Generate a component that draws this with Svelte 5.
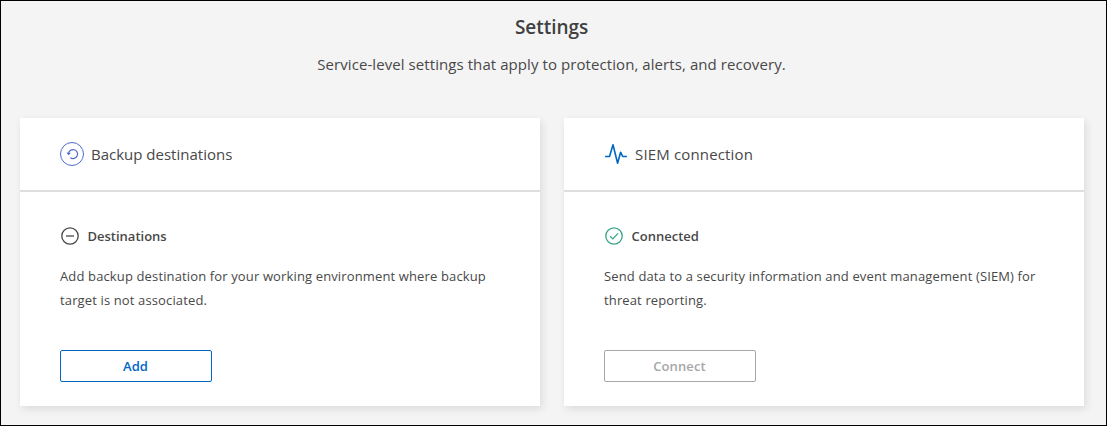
<script>
  const cards = [
    {
      icon: 'restore',
      title: 'Backup destinations',
      status: 'Destinations',
      connected: false,
      lines: [
        'Add backup destination for your working environment where backup',
        'target is not associated.'
      ],
      action: 'Add',
      disabled: false
    },
    {
      icon: 'pulse',
      title: 'SIEM connection',
      status: 'Connected',
      connected: true,
      lines: [
        'Send data to a security information and event management (SIEM) for',
        'threat reporting.'
      ],
      action: 'Connect',
      disabled: true
    }
  ];
</script>

<main class="page">
  <header>
    <h1>Settings</h1>
    <p class="subtitle">Service-level settings that apply to protection, alerts, and recovery.</p>
  </header>
  <div class="cards">
    {#each cards as card}
      <section class="card">
        <div class="card-head">
          {#if card.icon === 'restore'}
            <svg class="head-icon" width="24" height="24" viewBox="0 0 24 24" fill="none" stroke="#4d6bd0">
              <circle cx="12" cy="12" r="11.5" />
              <path d="M8.6 11.6A4.5 4.5 0 1 1 10.4 15.7" stroke-width="1.2" />
              <path d="M6.4 10.4L10.8 11L8.6 13.2Z" fill="#4d6bd0" stroke="none" />
            </svg>
          {:else}
            <svg class="head-icon" width="24" height="24" viewBox="0 0 24 24" fill="none" stroke="#0067c5" stroke-width="1.6" stroke-linejoin="round" stroke-linecap="round">
              <path d="M1.7 14.5H5.5L9 2.7L13.6 21.3L16.6 10.2L18.7 14.5H22.3" />
            </svg>
          {/if}
          <h2 class={card.icon}>{card.title}</h2>
        </div>
        <div class="card-body">
          <div class="status">
            <svg width="18" height="18" viewBox="0 0 18 18" fill="none" stroke={card.connected ? '#3aa688' : '#484848'} stroke-width="1.3">
              <circle cx="9" cy="9" r="8.2" />
              {#if card.connected}
                <path d="M5.1 9.2L7.9 11.9L13 6.4" />
              {:else}
                <path d="M5 9H13" />
              {/if}
            </svg>
            <span>{card.status}</span>
          </div>
          <p class="description">{card.lines[0]}<br />{card.lines[1]}</p>
          <button class:disabled={card.disabled} disabled={card.disabled}>{card.action}</button>
        </div>
      </section>
    {/each}
  </div>
</main>

<style>
  .page {
    box-sizing: border-box;
    width: 1107px;
    height: 426px;
    border: 1px solid #000;
    background: #f4f4f4;
    color: #484848;
    font-family: "Open Sans", "Noto Sans", sans-serif;
    overflow: hidden;
  }
  header {
    width: 1101px;
    height: 117px;
    text-align: center;
  }
  h1, h2, p { margin: 0; }
  h1 {
    padding-top: 12px;
    font-size: 19px;
    line-height: 28px;
    font-weight: 600;
    letter-spacing: -0.05px;
    color: #404040;
  }
  .subtitle {
    padding-top: 11px;
    font-size: 15px;
    line-height: 24px;
    letter-spacing: 0.075px;
  }
  .cards {
    display: flex;
    gap: 24px;
    padding-left: 19px;
  }
  .card {
    width: 520px;
    height: 288px;
    background: #fff;
    box-shadow: 2px 3px 8px rgba(0, 0, 0, 0.1);
  }
  .card-head {
    box-sizing: border-box;
    display: flex;
    align-items: center;
    gap: 7px;
    height: 74px;
    padding-left: 40px;
    border-bottom: 2px solid #dedede;
  }
  h2 {
    font-size: 15px;
    line-height: 24px;
    font-weight: 400;
  }
  h2.pulse { letter-spacing: 0.16px; }
  .card-body { padding: 32px 0 0 40px; }
  .status {
    display: flex;
    align-items: center;
    gap: 8.5px;
    height: 24px;
    padding-left: 1px;
    font-size: 13px;
    font-weight: 600;
  }
  .description {
    padding-top: 16px;
    font-size: 13px;
    line-height: 24px;
    letter-spacing: 0.135px;
    white-space: nowrap;
  }
  button {
    display: block;
    box-sizing: border-box;
    width: 152px;
    height: 32px;
    margin: 38px 0 0;
    padding: 0 1px 0 0;
    border: 1px solid #0067c5;
    border-radius: 2px;
    background: #fff;
    color: #0067c5;
    font: 600 13px/28px "Open Sans", "Noto Sans", sans-serif;
    letter-spacing: 0.1px;
  }
  button.disabled {
    border-color: #a7a7a7;
    color: #a7a7a7;
  }
</style>
